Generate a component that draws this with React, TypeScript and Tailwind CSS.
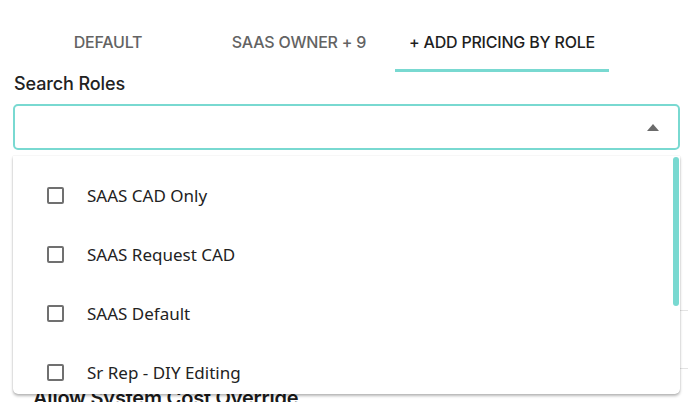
const roles = ["SAAS CAD Only", "SAAS Request CAD", "SAAS Default", "Sr Rep - DIY Editing", "Sr Rep - Full Access"];

const tabs = [
  { label: "DEFAULT", width: "w-[190px]", active: false },
  { label: "SAAS OWNER + 9", width: "w-[192px]", active: false },
  { label: "+ ADD PRICING BY ROLE", width: "w-[214px]", active: true },
];

export default function App() {
  return (
    <div className="relative w-[688px] h-[402px] overflow-hidden bg-white" style={{ fontFamily: "Inter, 'Liberation Sans', sans-serif" }}>
      {/* tabs */}
      <div className="flex pl-[13px]">
        {tabs.map((t) => (
          <div
            key={t.label}
            className={`${t.width} mt-[14px] h-[58px] flex items-center justify-center border-b-[3px] text-[16px] font-medium tracking-[-0.2px] ${
              t.active ? "border-[#79d9d1] text-[#1f1f1f]" : "border-transparent text-[#636363]"
            }`}
          >
            {t.label}
          </div>
        ))}
      </div>

      <div className="pl-[14px] text-[18px] leading-[24px] font-medium text-[#222222] tracking-[-0.1px]">Search Roles</div>

      <div className="ml-[13px] mt-[8px] w-[667px] h-[46px] border-2 border-[#79d9d1] rounded-[5px] flex items-center justify-end pr-[19px]">
        <svg width="12" height="7" viewBox="0 0 12 7">
          <path d="M0 7 L6 0 L12 7 Z" fill="#6b6b6b" />
        </svg>
      </div>

      {/* page content behind the menu */}
      <div className="ml-[13px] mt-[160px] border-t border-[#e3e3e3] h-[58px]" />
      <div className="ml-[13px] border-t border-[#e3e3e3]" />
      <div className="pl-[33px] mt-[15px] text-[20px] leading-[28px] font-semibold text-[#1a1a1a] tracking-[-0.2px]">Allow System Cost Override</div>

      {/* dropdown menu */}
      <div className="absolute top-[156px] left-[13px] w-[667px] h-[238px] bg-white rounded-b-[5px] shadow-[0_2px_3px_rgba(0,0,0,0.28),0_0_1px_rgba(0,0,0,0.25)] overflow-hidden">
        <div className="pt-[10px]" style={{ fontFamily: "'Noto Sans', 'Liberation Sans', sans-serif" }}>
          {roles.map((r) => (
            <div key={r} className="h-[59px] flex items-center pl-[34px]">
              <div className="w-[17px] h-[17px] border-2 border-[#707070] rounded-[2px]" />
              <span className="ml-[23px] text-[17px] text-[#222222]">{r}</span>
            </div>
          ))}
        </div>
        <div className="absolute right-[1px] top-[1px] w-[6px] h-[149px] rounded-full bg-[#79d9d1]" />
      </div>
    </div>
  );
}
